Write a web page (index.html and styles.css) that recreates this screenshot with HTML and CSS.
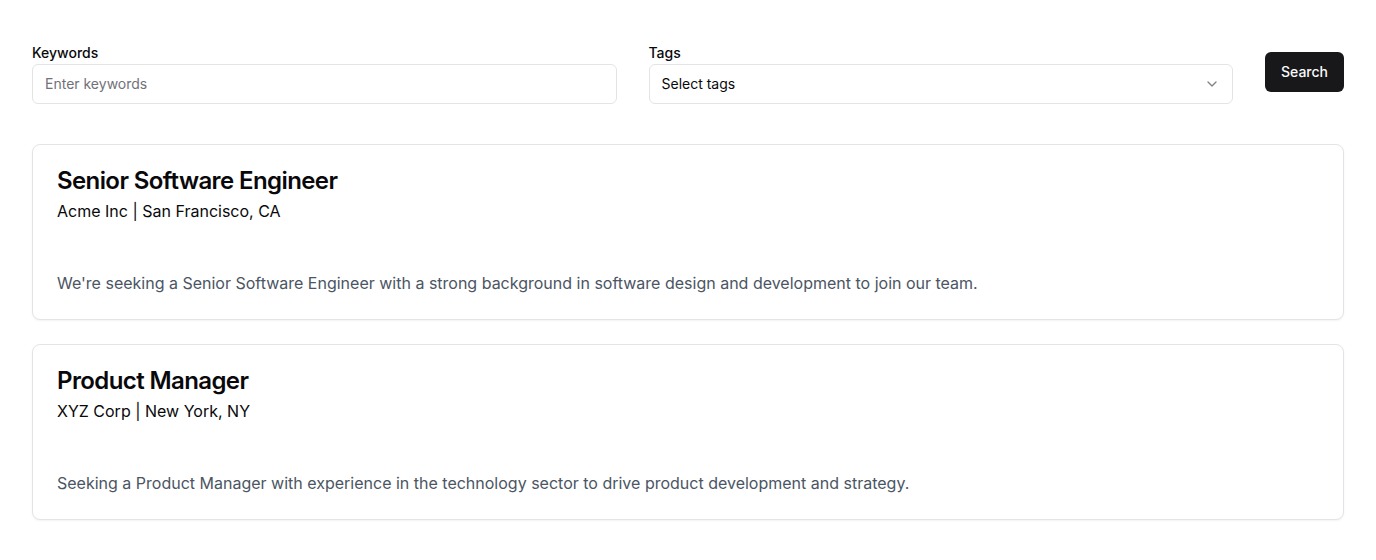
FILE: index.html
```html
<!DOCTYPE html>
<html lang="en">
<head>
<meta charset="utf-8">
<title>Jobs</title>
<link rel="stylesheet" href="styles.css">
</head>
<body>
<div class="page">
  <form class="filters">
    <div class="field">
      <label class="label" for="kw">Keywords</label>
      <input id="kw" class="input" type="text" placeholder="Enter keywords">
    </div>
    <div class="field">
      <label class="label">Tags</label>
      <button type="button" class="select">
        <span>Select tags</span>
        <svg class="chev" width="16" height="16" viewBox="0 0 24 24" fill="none" stroke="currentColor" stroke-width="2" stroke-linecap="round" stroke-linejoin="round"><path d="m6 9 6 6 6-6"/></svg>
      </button>
    </div>
    <button type="button" class="btn">Search</button>
  </form>

  <div class="list">
    <div class="card">
      <div class="card-header">
        <h3 class="title">Senior Software Engineer</h3>
        <p class="meta">Acme Inc | San Francisco, CA</p>
      </div>
      <div class="card-content">
        <p class="desc">We're seeking a Senior Software Engineer with a strong background in software design and development to join our team.</p>
      </div>
    </div>
    <div class="card">
      <div class="card-header">
        <h3 class="title">Product Manager</h3>
        <p class="meta">XYZ Corp | New York, NY</p>
      </div>
      <div class="card-content">
        <p class="desc">Seeking a Product Manager with experience in the technology sector to drive product development and strategy.</p>
      </div>
    </div>
  </div>
</div>
</body>
</html>
```

FILE: styles.css
```css
* { box-sizing: border-box; }
html, body { margin: 0; padding: 0; background: #ffffff; }
body {
  font-family: Inter, "Liberation Sans", sans-serif;
  color: #09090b;
}
.page {
  padding: 46px 32px 32px;
}
.filters {
  display: flex;
  align-items: flex-start;
  gap: 32px;
  margin: 0 0 40px;
}
.field {
  flex: 1;
  display: flex;
  flex-direction: column;
  gap: 4px;
}
.label {
  font-size: 14px;
  line-height: 14px;
  font-weight: 500;
  color: #09090b;
}
.input, .select {
  height: 40px;
  width: 100%;
  border: 1px solid #e4e4e7;
  border-radius: 6px;
  background: #fff;
  padding: 0 12px 2px;
  font-family: inherit;
  font-size: 14px;
  color: #09090b;
  outline: none;
}
.input::placeholder { color: #71717a; }
.select {
  display: flex;
  align-items: center;
  justify-content: space-between;
  text-align: left;
  cursor: pointer;
}
.chev { color: #09090b; opacity: 0.5; margin-top: 2px; }
.btn {
  margin-top: 6px;
  height: 40px;
  padding: 0 16px 2px;
  border: none;
  border-radius: 6px;
  background: #18181b;
  color: #fafafa;
  font-family: inherit;
  font-size: 14px;
  font-weight: 500;
  cursor: pointer;
}
.list {
  display: flex;
  flex-direction: column;
  gap: 24px;
}
.card {
  border: 1px solid #e4e4e7;
  border-radius: 8px;
  background: #fff;
  box-shadow: 0 1px 2px rgba(0,0,0,0.05);
}
.card-header {
  padding: 24px;
  display: flex;
  flex-direction: column;
  gap: 6px;
}
.title {
  margin: 0;
  font-size: 24px;
  line-height: 24px;
  font-weight: 600;
  letter-spacing: -0.6px;
}
.meta {
  margin: 0;
  font-size: 16px;
  line-height: 24px;
  color: #09090b;
}
.card-content {
  padding: 0 24px 24px;
}
.desc {
  margin: 0;
  padding-top: 24px;
  font-size: 16px;
  line-height: 24px;
  color: #4b5563;
}
```
